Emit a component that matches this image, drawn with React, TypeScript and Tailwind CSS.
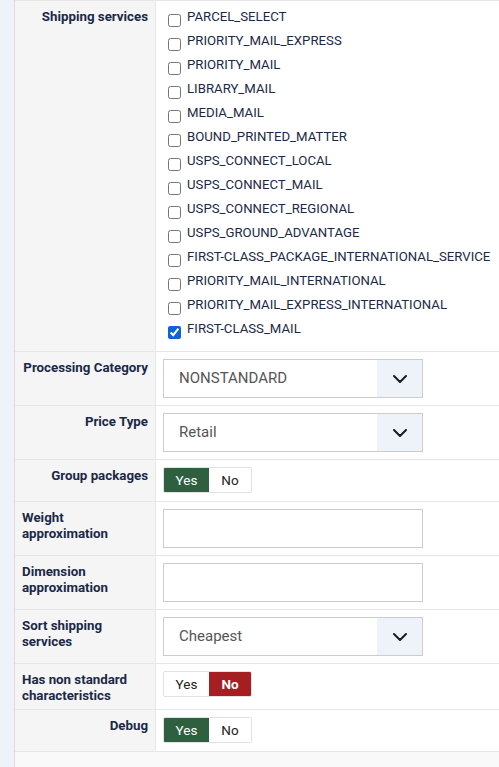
const services = [
  "PARCEL_SELECT",
  "PRIORITY_MAIL_EXPRESS",
  "PRIORITY_MAIL",
  "LIBRARY_MAIL",
  "MEDIA_MAIL",
  "BOUND_PRINTED_MATTER",
  "USPS_CONNECT_LOCAL",
  "USPS_CONNECT_MAIL",
  "USPS_CONNECT_REGIONAL",
  "USPS_GROUND_ADVANTAGE",
  "FIRST-CLASS_PACKAGE_INTERNATIONAL_SERVICE",
  "PRIORITY_MAIL_INTERNATIONAL",
  "PRIORITY_MAIL_EXPRESS_INTERNATIONAL",
  "FIRST-CLASS_MAIL",
];

function Row({
  label,
  children,
  tall = false,
}: {
  label: string;
  children: React.ReactNode;
  tall?: boolean;
}) {
  return (
    <div className="grid grid-cols-[141px_1fr] border-b border-[#e6e6e6]">
      <div className="flex justify-end items-start bg-[#f5f5f5] border-r border-[#e6e6e6] px-[7px] pt-[8px] pb-[5px]">
        <span className="text-left text-[13.3px] leading-[16px] font-bold text-[#1a2948]">{label}</span>
      </div>
      <div className={"bg-white pl-[7px] pt-[7px] " + (tall ? "pb-[8px]" : "pb-[7px]")}>{children}</div>
    </div>
  );
}

function Chevron() {
  return (
    <svg width="14" height="8" viewBox="0 0 14 8" fill="none">
      <path d="M1 1l6 6 6-6" stroke="#1b1b1b" strokeWidth="2" strokeLinecap="round" strokeLinejoin="round" />
    </svg>
  );
}

function Select({ value }: { value: string }) {
  return (
    <div className="flex w-[260px] h-[39px] border border-[#cccccc] bg-white">
      <div className="flex-1 flex items-center pl-[15px] text-[15px] text-[#555555]">{value}</div>
      <div className="w-[45px] bg-[#eef3fa] flex items-center justify-center">
        <Chevron />
      </div>
    </div>
  );
}

function Input() {
  return <div className="w-[260px] h-[39px] border border-[#cccccc] bg-white" />;
}

function Toggle({ yes, noRed = false }: { yes: boolean; noRed?: boolean }) {
  return (
    <div className="inline-flex h-[26px] border border-[#e2e2e2] rounded-[2px] overflow-hidden text-[13.5px]">
      <div
        className={
          "w-[45px] flex items-center justify-center " +
          (yes ? "bg-[#2e5f3f] text-white" : "bg-white text-[#222222]")
        }
      >
        Yes
      </div>
      <div
        className={
          "w-[42px] flex items-center justify-center " +
          (!yes && noRed ? "bg-[#a51e22] text-white font-bold" : "bg-white text-[#222222]")
        }
      >
        No
      </div>
    </div>
  );
}

export default function App() {
  return (
    <div
      className="flex w-[499px] h-[767px] overflow-hidden bg-[#eef3fa]"
      style={{ fontFamily: "Roboto, 'Liberation Sans', sans-serif" }}
    >
      <div className="w-[14px] shrink-0" />
      <div className="flex-1 flex flex-col border-l border-[#dcdcdc] bg-[#f9f9f9]">
        <div className="border-t border-[#e6e6e6]">
          <Row label="Shipping services">
            <div className="flex flex-col">
              {services.map((s, i) => (
                <label key={s} className="flex items-start h-[24px] text-[13.2px] text-[#1a2948]">
                  <input
                    type="checkbox"
                    defaultChecked={i === services.length - 1}
                    className="w-[13px] h-[13px] ml-[5px] mr-[6px] mt-[6px] shrink-0 accent-[#0b63d6]"
                  />
                  <span className="leading-[16px] pt-[1px]">{s}</span>
                </label>
              ))}
            </div>
          </Row>
          <Row label="Processing Category">
            <Select value="NONSTANDARD" />
          </Row>
          <Row label="Price Type">
            <Select value="Retail" />
          </Row>
          <Row label="Group packages" tall>
            <Toggle yes />
          </Row>
          <Row label="Weight approximation">
            <Input />
          </Row>
          <Row label="Dimension approximation">
            <Input />
          </Row>
          <Row label="Sort shipping services">
            <Select value="Cheapest" />
          </Row>
          <Row label="Has non standard characteristics">
            <Toggle yes={false} noRed />
          </Row>
          <Row label="Debug" tall>
            <Toggle yes />
          </Row>
        </div>
      </div>
    </div>
  );
}
